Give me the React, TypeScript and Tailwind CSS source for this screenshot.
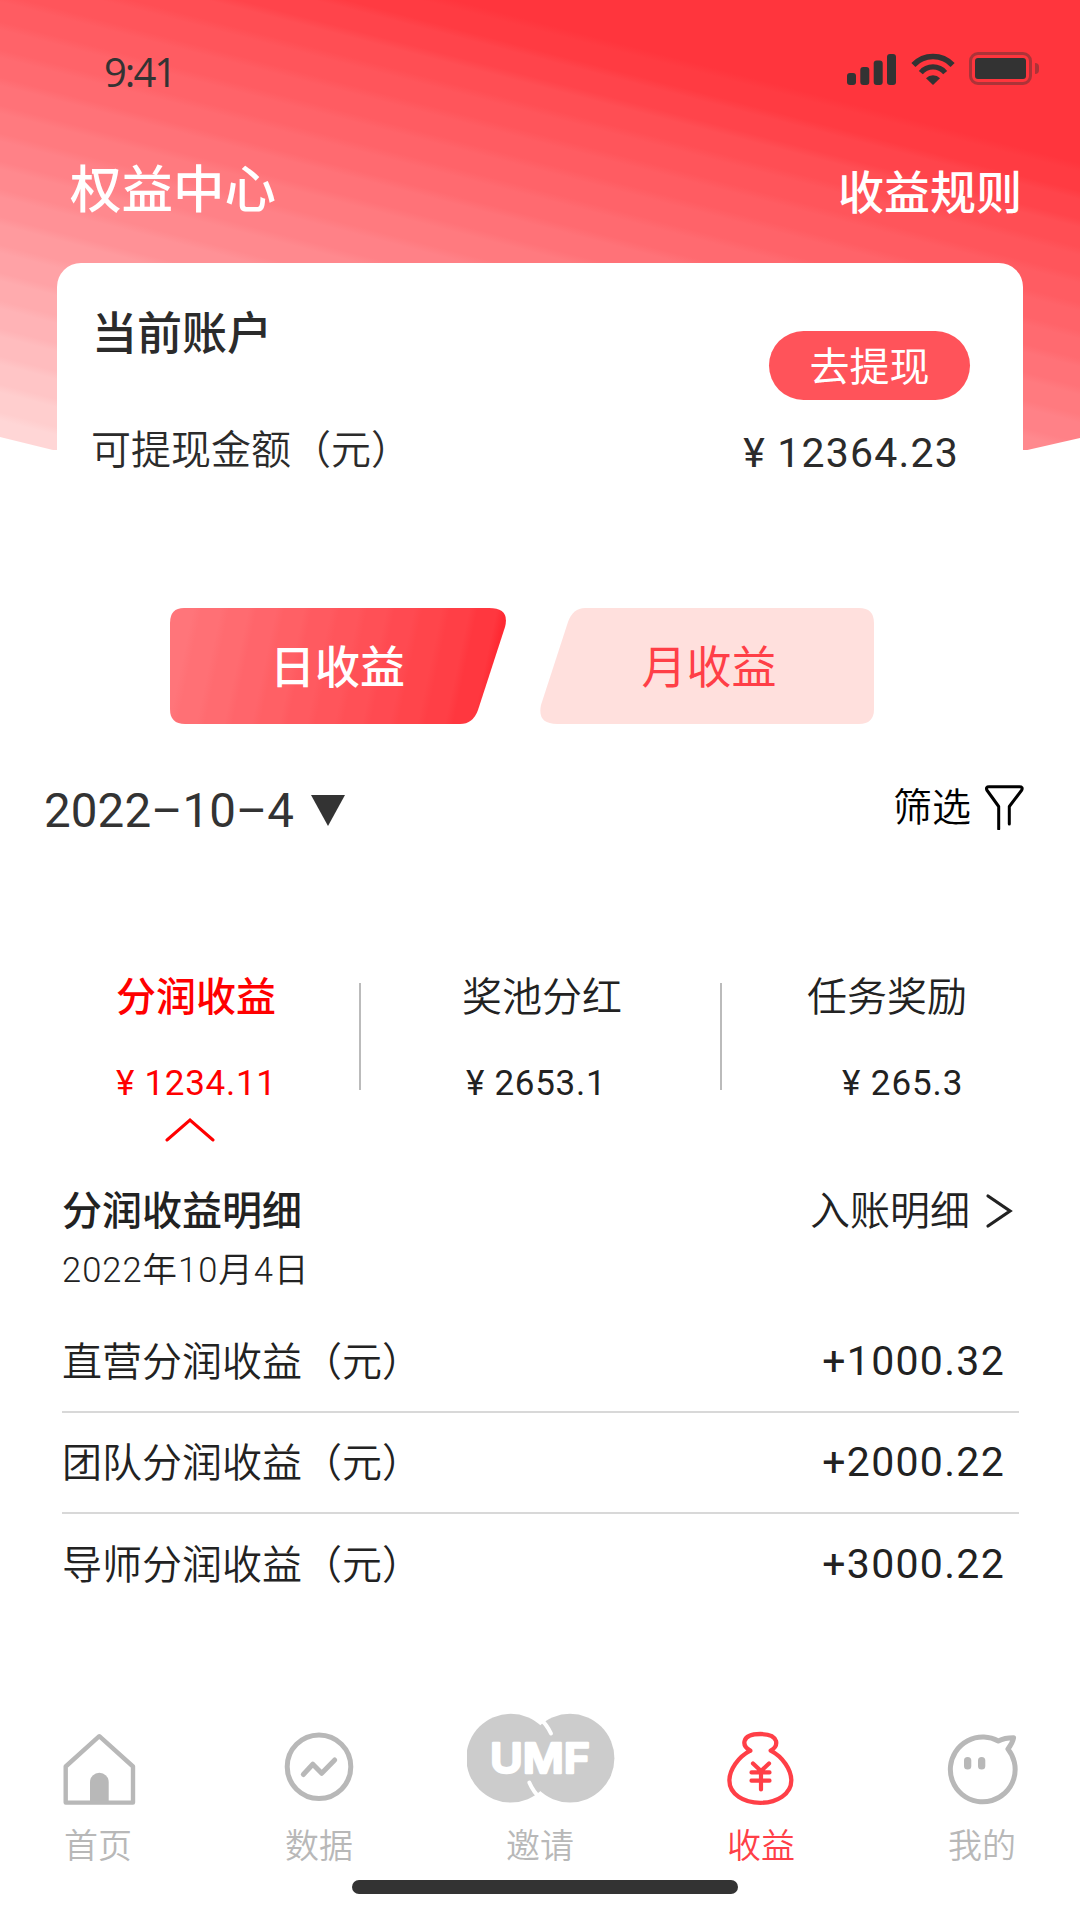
import type { ReactNode } from 'react';

type Stop = { color: number[]; at: number };

type Earning = {
  id: number;
  title: string;
  amount: string;
};

type NavItem = {
  id: number;
  label: string;
  icon: ReactNode;
  active?: boolean;
};

const headerStops: Stop[] = [
  { color: [255, 53, 61], at: 160 },
  { color: [255, 80, 86], at: 235 },
  { color: [255, 104, 110], at: 330 },
  { color: [255, 140, 145], at: 455 },
  { color: [255, 168, 172], at: 545 },
  { color: [255, 218, 217], at: 700 },
];

const tabStops: Stop[] = [
  { color: [255, 120, 125], at: 0 },
  { color: [255, 84, 90], at: 180 },
  { color: [255, 60, 67], at: 300 },
  { color: [255, 36, 46], at: 350 },
];

const details: Earning[] = [
  { id: 1, title: '直营分润收益（元）', amount: '+1000.32' },
  { id: 2, title: '团队分润收益（元）', amount: '+2000.22' },
  { id: 3, title: '导师分润收益（元）', amount: '+3000.22' },
];

function colorAt(stops: Stop[], position: number) {
  const next = stops.findIndex((stop) => stop.at > position);
  if (next === 0) return stops[0].color;
  if (next === -1) return stops[stops.length - 1].color;
  const a = stops[next - 1];
  const b = stops[next];
  const ratio = (position - a.at) / (b.at - a.at);
  return a.color.map((c, i) => Math.round(c + (b.color[i] - c) * ratio));
}

// Gradient made of wide bands with a short blend between them
function bandedGradient(angle: number, stops: Stop[], step: number) {
  const last = stops[stops.length - 1].at;
  const parts: string[] = [];
  for (let at = 0; at < last; at += step) {
    const color = `rgb(${colorAt(stops, at + step / 2).join(',')})`;
    parts.push(`${color} ${at + step * 0.15}px`, `${color} ${at + step * 0.85}px`);
  }
  return `linear-gradient(${angle}deg, ${parts.join(', ')})`;
}

function StatusBar() {
  return (
    <div className="flex h-[64px] items-end justify-between pr-[41px] pl-[104px] text-[#333]">
      <span className="mb-[-30px] font-['Open_Sans'] text-[40px] leading-[44px] tracking-[-2px]">
        9:41
      </span>
      <div className="mb-[-21px] flex items-center">
        <svg className="h-[32px] w-[50px]" viewBox="0 0 50 32" fill="currentColor">
          <rect x="0" y="20" width="9" height="12" rx="3" />
          <rect x="13.3" y="14" width="9" height="18" rx="3" />
          <rect x="26.7" y="7.5" width="9" height="24.5" rx="3" />
          <rect x="40" y="1" width="9" height="31" rx="3" />
        </svg>
        <svg className="ml-[14px] h-[32px] w-[44px]" viewBox="0 0 44 32">
          <g fill="none" stroke="currentColor">
            <path d="M2.4 12A27 27 0 0 1 41.6 12" strokeWidth="5.6" />
            <path d="M9.8 19.6A16 16 0 0 1 34.2 19.6" strokeWidth="5.2" />
          </g>
          <path d="M15 25.2A10 10 0 0 1 29 25.2L22 32Z" fill="currentColor" />
        </svg>
        <div className="ml-[14px] h-[33px] w-[63px] rounded-[9px] border-3 border-[#333]/40 p-[3px]">
          <div className="h-[21px] w-[51px] rounded-[3px] bg-[#333]" />
        </div>
        <div className="ml-[3px] h-[11px] w-[4px] rounded-r-full bg-[#333]/40" />
      </div>
    </div>
  );
}

function Header() {
  return (
    <header
      className="h-[450px] [clip-path:polygon(0_0,100%_0,100%_438px,1023px_451px,57px_451px,0_437px)]"
      style={{ background: bandedGradient(194.6, headerStops, 27) }}
    >
      <StatusBar />
      <div className="mt-[94px] flex h-[64px] items-center justify-between pr-[58px] pl-[70px] font-medium text-white">
        <h1 className="text-[51.5px] leading-none">权益中心</h1>
        <a className="mt-[4px] text-[46px] leading-none">收益规则</a>
      </div>
      <section className="mx-[57px] mt-[41px] h-[187px] rounded-t-[24px] bg-white" />
    </header>
  );
}

function AccountCard() {
  return (
    <section className="relative mx-[57px] mt-[-187px] h-[345px] pr-[53px] pl-[35px]">
      <div className="flex h-[160px] justify-between">
        <h2 className="mt-[48px] text-[45px] leading-none font-medium">当前账户</h2>
        <button
          className="mt-[68px] h-[69px] w-[201px] rounded-full bg-[#ff535a] pt-[2px] text-[40px] leading-none text-white"
          type="button"
        >
          去提现
        </button>
      </div>
      <div className="mt-[2px] flex items-center justify-between pr-[11px] text-[40px] leading-none font-[350]">
        <span className="ml-[-1px]">可提现金额（元）</span>
        <span className="mt-[8px] font-['Roboto'] text-[41px] font-[370] tracking-[1.2px]">
          ¥ 12364.23
        </span>
      </div>
    </section>
  );
}

function PeriodTabs() {
  return (
    <div className="flex gap-[34px] pl-[170px] text-[45px] leading-none">
      <button
        className="h-[116px] w-[336px] pt-[2px] pr-[1px] font-medium text-white [clip-path:path('M14_0H319Q340_0_335_19L308_102Q303_116_290_116H15Q0_116_0_101V15Q0_0_14_0Z')]"
        style={{ background: bandedGradient(102, tabStops, 27) }}
        type="button"
      >
        日收益
      </button>
      <button
        className="h-[116px] w-[334px] bg-[#ffe0dd] pt-[2px] pl-[4px] text-[#ff3f47] [clip-path:path('M45_0H319Q334_0_334_15V101Q334_116_319_116H17Q-3_116_1_97L28_14Q33_0_45_0Z')]"
        type="button"
      >
        月收益
      </button>
    </div>
  );
}

function FilterBar() {
  return (
    <div className="mt-[54px] flex h-[64px] items-center justify-between pr-[56px] pl-[44px]">
      <button className="flex items-center text-[#333]" type="button">
        <span className="mt-[4px] font-['Roboto'] text-[47.5px] leading-none tracking-[0.1px]">
          2022–10–4
        </span>
        <svg className="ml-[17px] h-[31px] w-[34px]" viewBox="0 0 34 31" fill="currentColor">
          <path d="M0 0H34L17 31Z" />
        </svg>
      </button>
      <button className="mt-[-7px] flex items-center text-black" type="button">
        <span className="text-[39px] leading-none font-[350]">筛选</span>
        <svg
          className="ml-[13px] h-[46px] w-[40px]"
          viewBox="0 0 40 46"
          fill="none"
          stroke="currentColor"
          strokeWidth="3"
          strokeLinecap="round"
          strokeLinejoin="round"
        >
          <path d="M14.7 45V22.5L2.8 6Q1.6 2.8 5 2.8H35.5Q39.2 2.8 37.8 6L25.3 22.5V40" />
        </svg>
      </button>
    </div>
  );
}

function Summary() {
  return (
    <div className="mt-[135px] flex h-[185px] text-[40px] leading-none text-[#222]">
      <div className="w-[359px] pl-[116px] text-[#f00]">
        <div className="font-medium">分润收益</div>
        <div className="mt-[49px] font-['Roboto'] text-[35px] tracking-[0.7px]">¥ 1234.11</div>
        <svg
          className="mt-[16px] ml-[49px] h-[25px] w-[50px]"
          viewBox="0 0 50 25"
          fill="none"
          stroke="currentColor"
          strokeWidth="3"
          strokeLinecap="round"
        >
          <path d="M2 23L25 3L48 23" />
        </svg>
      </div>
      <div className="mt-[6px] h-[107px] w-[2px] bg-[#bbb]" />
      <div className="w-[359px] pl-[101px]">
        <div className="font-[350]">奖池分红</div>
        <div className="mt-[49px] ml-[4px] font-['Roboto'] text-[35px] tracking-[0.7px]">
          ¥ 2653.1
        </div>
      </div>
      <div className="mt-[6px] h-[107px] w-[2px] bg-[#bbb]" />
      <div className="pl-[85px]">
        <div className="font-[350]">任务奖励</div>
        <div className="mt-[49px] ml-[35px] font-['Roboto'] text-[35px] tracking-[0.9px]">
          ¥ 265.3
        </div>
      </div>
    </div>
  );
}

function DetailList() {
  return (
    <section className="mt-[29px] h-[515px] pr-[61px] pl-[62px] text-[40px] leading-none text-[#222]">
      <div className="flex justify-between">
        <h3 className="font-medium">分润收益明细</h3>
        <a className="flex items-center pr-[6px] font-[350]">
          入账明细
          <svg
            className="ml-[15px] h-[36px] w-[28px]"
            viewBox="0 0 28 36"
            fill="none"
            stroke="currentColor"
            strokeWidth="3.2"
            strokeLinecap="round"
          >
            <path d="M3 3L25 18L3 33" />
          </svg>
        </a>
      </div>
      <p className="mt-[23px] font-['Roboto','Noto_Sans_CJK_SC',sans-serif] text-[34.5px] leading-[33px] font-[350] tracking-[1px]">
        2022年10月4日
      </p>
      <ul className="mt-[25px]">
        {details.map((item) => (
          <li
            key={item.id}
            className="flex h-[101px] items-center justify-between border-b-2 border-[#d8d8d8] pr-[14px] font-[350] last:border-0"
          >
            <span>{item.title}</span>
            <span className="font-['Roboto'] text-[41px] font-[370] tracking-[1.3px]">
              {item.amount}
            </span>
          </li>
        ))}
      </ul>
    </section>
  );
}

function HomeIcon() {
  return (
    <svg className="ml-[2px] h-[74px] w-[74px]" viewBox="0 0 74 74">
      <path
        d="M37.3 4.2L3.7 34.5V70.6H71V34.5Z"
        fill="none"
        stroke="currentColor"
        strokeWidth="4.4"
        strokeLinejoin="round"
      />
      <path d="M28 71V50A9.3 9.3 0 0 1 46.7 50V71Z" fill="currentColor" />
    </svg>
  );
}

function DataIcon() {
  return (
    <svg
      className="h-[74px] w-[74px]"
      viewBox="0 0 74 74"
      fill="none"
      stroke="currentColor"
      strokeWidth="5"
      strokeLinecap="round"
      strokeLinejoin="round"
    >
      <circle cx="37" cy="34.7" r="31.8" />
      <path d="M21.3 42.5L30.8 32.2L39.7 41.3L52.7 28" />
    </svg>
  );
}

function UmfLogo() {
  return (
    <svg className="mb-[2px] ml-[1px] h-[92px] w-[148px]" viewBox="0 0 148 92">
      <circle cx="43.7" cy="46.2" r="44.4" fill="#ccc" />
      <circle cx="103" cy="46.2" r="44.4" fill="#ccc" />
      <g fill="none" stroke="#fff" strokeWidth="4" strokeLinecap="round">
        <path d="M72 5.5A49 49 0 0 1 84 21.5" />
        <path d="M62.3 70.5A48 48 0 0 0 74 87" />
      </g>
      <text
        x="23"
        y="60.5"
        textLength="100"
        lengthAdjust="spacingAndGlyphs"
        className="font-['Inter'] text-[41px] font-semibold"
        fill="#fff"
        stroke="#fff"
        strokeWidth="2.4"
        strokeLinejoin="round"
      >
        UMF
      </text>
    </svg>
  );
}

function MoneyBagIcon() {
  return (
    <svg
      className="mr-[2px] h-[76px] w-[68px]"
      viewBox="0 0 68 76"
      fill="none"
      stroke="currentColor"
      strokeWidth="4.3"
      strokeLinecap="round"
      strokeLinejoin="round"
    >
      <path d="M24.3 20.7C20.5 18.5 17.5 15 18.6 11C20 6 27 4 34.3 4C41.5 4 48.5 6 50 11C51 15 48.5 18.5 44.7 20.7C57 27 65.3 40 65.3 50.5C65.3 64 51 72.8 34.3 72.8C17.5 72.8 3.4 64 3.4 50.5C3.4 40 12 27 24.3 20.7" />
      <path d="M27 33.5L35 41L43 33.5M35 41V59.5M25.5 42.4H43.5M25.5 50.7H43.5" strokeWidth="4.2" />
    </svg>
  );
}

function ProfileIcon() {
  return (
    <svg className="ml-[2px] h-[74px] w-[74px]" viewBox="0 0 74 74">
      <path
        d="M52.3 9C57 6.6 62.5 5.8 67.6 5.8C66.8 9.8 64.8 13.5 61.9 17A32.4 32.4 0 1 1 52.3 9Z"
        fill="none"
        stroke="currentColor"
        strokeWidth="5"
        strokeLinejoin="round"
      />
      <rect x="18" y="25" width="7.3" height="12.6" rx="3.6" fill="currentColor" />
      <rect x="32" y="25" width="7.3" height="12.6" rx="3.6" fill="currentColor" />
    </svg>
  );
}

const navItems: NavItem[] = [
  { id: 1, label: '首页', icon: <HomeIcon /> },
  { id: 2, label: '数据', icon: <DataIcon /> },
  { id: 3, label: '邀请', icon: <UmfLogo /> },
  { id: 4, label: '收益', icon: <MoneyBagIcon />, active: true },
  { id: 5, label: '我的', icon: <ProfileIcon /> },
];

function BottomNav() {
  return (
    <nav className="flex h-[174px] justify-between px-[23px]">
      {navItems.map((item) => (
        <a
          key={item.id}
          className={`flex w-[150px] flex-col items-center ${item.active ? 'text-[#ff3f47]' : 'text-[#b8b8b8]'}`}
        >
          <div className="flex h-[100px] items-end justify-center">{item.icon}</div>
          <span className="mt-[23px] text-[34px] leading-none font-[350]">{item.label}</span>
        </a>
      ))}
    </nav>
  );
}

function App() {
  return (
    <main className="h-[1920px] w-[1080px] overflow-hidden bg-white font-['Inter','Noto_Sans_CJK_SC',sans-serif] text-[#2b2b2b]">
      <Header />
      <AccountCard />
      <PeriodTabs />
      <FilterBar />
      <Summary />
      <DetailList />
      <BottomNav />
      <div className="ml-[352px] h-[14px] w-[386px] rounded-full bg-[#333]" />
    </main>
  );
}

export default App;
